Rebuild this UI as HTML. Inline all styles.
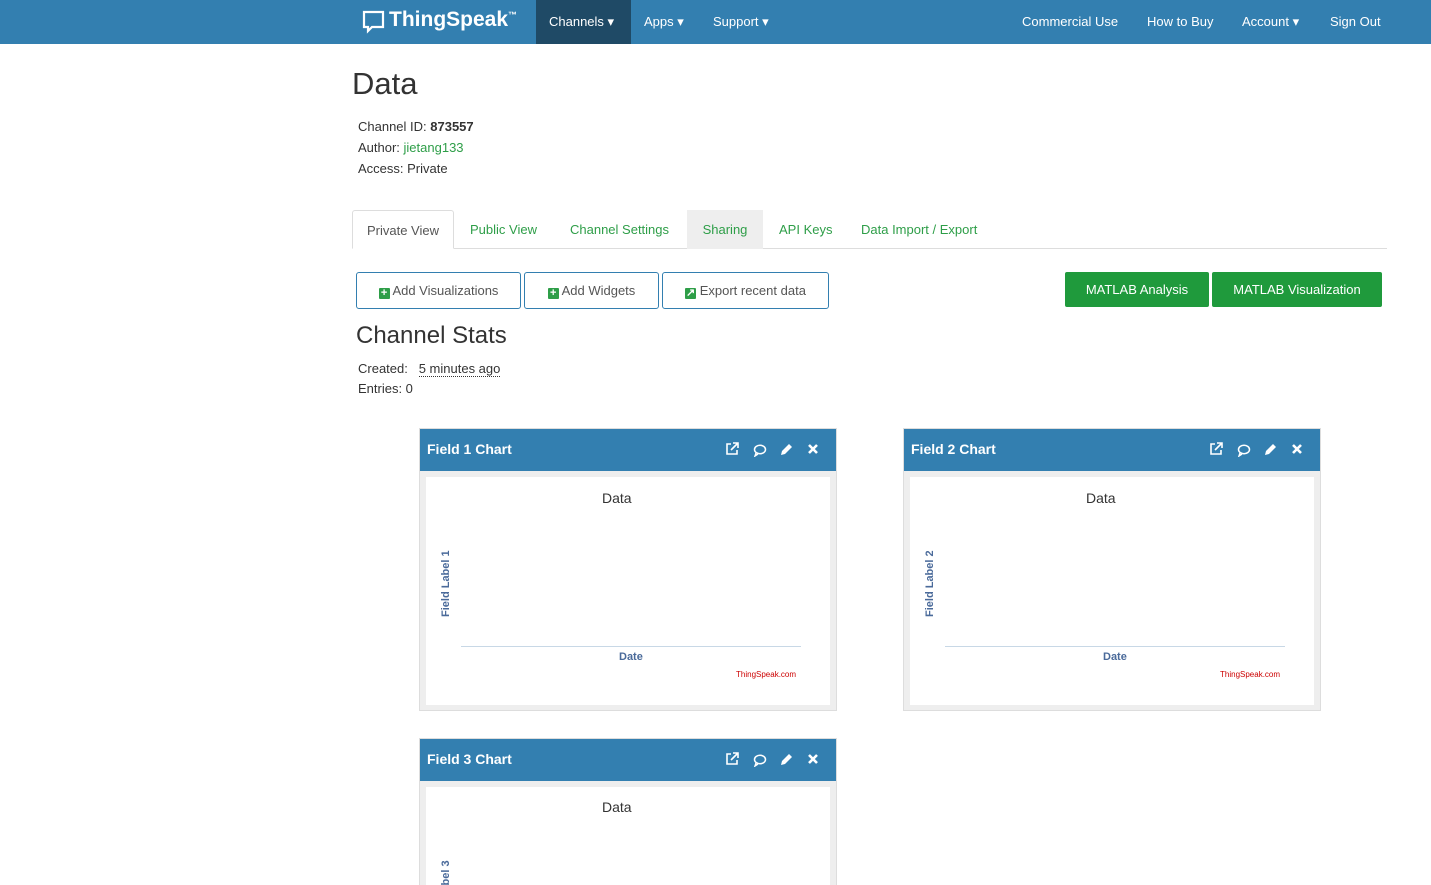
<!DOCTYPE html>
<html><head><style>
*{box-sizing:border-box}
html,body{margin:0;width:1431px;height:885px;overflow:hidden}
body{font-family:"Liberation Sans",sans-serif;font-size:13px;color:#333;background:#fff;position:relative}
.nav{position:absolute;left:0;top:0;width:1431px;height:44px;background:#337fb0;color:#fff}
.nav span{position:absolute;top:14px;font-size:13px}
.a{position:absolute}
.green{color:#2e9e48}
.tab{position:absolute;top:210px;height:39px;padding-top:12px;font-size:13px;color:#2e9e48}
.btn{position:absolute;top:272px;height:37px;border:1px solid #337fb0;border-radius:3px;text-align:center;padding-top:10px;font-size:13px;color:#555}
.gbtn{position:absolute;top:272px;height:35px;background:#1f9a3c;color:#fff;border-radius:2px;text-align:center;padding-top:10px;font-size:13px}
.pi{display:inline-block;width:11px;height:11px;background:#2e9e48;color:#fff;font-size:11px;line-height:11px;font-weight:bold;vertical-align:-1px;border-radius:1px}
.panel{position:absolute;width:418px;border:1px solid #ddd;background:#eee;overflow:hidden}
.ph{height:42px;background:#337fb0;color:#fff;font-weight:bold;font-size:14px;padding:12px 7px;position:relative}
.ph svg{position:absolute;top:13px}
.pb{position:absolute;left:6px;top:48px;width:404px;background:#fff}
</style></head><body>
<div class="nav">
<svg style="position:absolute;left:362px;top:10px" width="24" height="24" viewBox="0 0 24 24"><path d="M2 2h19v15H10l-4 4v-4H2z" fill="none" stroke="#fff" stroke-width="2.2"/></svg>
<span style="left:389px;top:8px;font-size:21px;font-weight:bold">ThingSpeak<sup style="font-size:9px">™</sup></span>
<div style="position:absolute;left:536px;top:0;width:95px;height:44px;background:#1f4a66"></div>
<span style="left:549px">Channels ▾</span>
<span style="left:644px">Apps ▾</span>
<span style="left:713px">Support ▾</span>
<span style="left:1022px">Commercial Use</span>
<span style="left:1147px">How to Buy</span>
<span style="left:1242px">Account ▾</span>
<span style="left:1330px">Sign Out</span>
</div>
<div class="a" style="left:352px;top:66px;font-size:31px;color:#333">Data</div>
<div class="a" style="left:358px;top:116px;line-height:21px">Channel ID: <b>873557</b><br>Author: <span class="green">jietang133</span><br>Access: Private</div>
<div class="a" style="left:352px;top:248px;width:1035px;border-top:1px solid #ddd"></div>
<div class="tab" style="left:352px;width:102px;border:1px solid #ddd;border-bottom:1px solid #fff;background:#fff;color:#555;text-align:center;border-radius:3px 3px 0 0">Private View</div>
<div class="tab" style="left:470px">Public View</div>
<div class="tab" style="left:570px">Channel Settings</div>
<div class="tab" style="left:687px;width:76px;background:#eee;text-align:center">Sharing</div>
<div class="tab" style="left:779px">API Keys</div>
<div class="tab" style="left:861px">Data Import / Export</div>
<div class="btn" style="left:356px;width:165px"><span class="pi">+</span> Add Visualizations</div>
<div class="btn" style="left:524px;width:135px"><span class="pi">+</span> Add Widgets</div>
<div class="btn" style="left:662px;width:167px"><span class="pi">↗</span> Export recent data</div>
<div class="gbtn" style="left:1065px;width:144px">MATLAB Analysis</div>
<div class="gbtn" style="left:1212px;width:170px">MATLAB Visualization</div>
<div class="a" style="left:356px;top:322px;font-size:24px;color:#333">Channel Stats</div>
<div class="a" style="left:358px;top:359px;line-height:20px">Created: &nbsp;&nbsp;<span style="border-bottom:1px dotted #333">5 minutes ago</span><br>Entries: 0</div>

<div class="panel" style="left:419px;top:428px;height:283px">
<div class="ph">Field 1 Chart
<svg style="left:305px" width="14" height="14" viewBox="0 0 14 14"><path d="M6 2H2v10h10V8" fill="none" stroke="#fff" stroke-width="1.6"/><path d="M8 1h5v5M13 1L6 8" fill="none" stroke="#fff" stroke-width="1.6"/></svg>
<svg style="left:333px;top:15px" width="14" height="13" viewBox="0 0 14 13"><ellipse cx="7" cy="5.5" rx="5.5" ry="4.2" fill="none" stroke="#fff" stroke-width="1.5"/><path d="M3 9l-1 3 3-2" fill="none" stroke="#fff" stroke-width="1.4"/></svg>
<svg style="left:360px;top:14px" width="13" height="13" viewBox="0 0 13 13"><path d="M1 12l1-4 7-7 3 3-7 7z" fill="#fff"/></svg>
<svg style="left:388px;top:15px" width="10" height="10" viewBox="0 0 10 10"><path d="M1 1l8 8M9 1l-8 8" stroke="#fff" stroke-width="2.6"/></svg>
</div>
<div class="pb" style="height:228px">
<div class="a" style="left:176px;top:13px;font-size:14px">Data</div>
<div class="a" style="left:14px;top:140px;transform:rotate(-90deg);transform-origin:0 0;font-size:11px;font-weight:bold;color:#4a6a9a">Field Label 1</div>
<div class="a" style="left:35px;top:169px;width:340px;border-top:1px solid #c8d8e6"></div>
<div class="a" style="left:193px;top:174px;font-size:11px;font-weight:bold;color:#4a6a9a">Date</div>
<div class="a" style="left:310px;top:193px;font-size:8px;color:#c00">ThingSpeak.com</div>
</div></div>

<div class="panel" style="left:903px;top:428px;height:283px">
<div class="ph">Field 2 Chart
<svg style="left:305px" width="14" height="14" viewBox="0 0 14 14"><path d="M6 2H2v10h10V8" fill="none" stroke="#fff" stroke-width="1.6"/><path d="M8 1h5v5M13 1L6 8" fill="none" stroke="#fff" stroke-width="1.6"/></svg>
<svg style="left:333px;top:15px" width="14" height="13" viewBox="0 0 14 13"><ellipse cx="7" cy="5.5" rx="5.5" ry="4.2" fill="none" stroke="#fff" stroke-width="1.5"/><path d="M3 9l-1 3 3-2" fill="none" stroke="#fff" stroke-width="1.4"/></svg>
<svg style="left:360px;top:14px" width="13" height="13" viewBox="0 0 13 13"><path d="M1 12l1-4 7-7 3 3-7 7z" fill="#fff"/></svg>
<svg style="left:388px;top:15px" width="10" height="10" viewBox="0 0 10 10"><path d="M1 1l8 8M9 1l-8 8" stroke="#fff" stroke-width="2.6"/></svg>
</div>
<div class="pb" style="height:228px">
<div class="a" style="left:176px;top:13px;font-size:14px">Data</div>
<div class="a" style="left:14px;top:140px;transform:rotate(-90deg);transform-origin:0 0;font-size:11px;font-weight:bold;color:#4a6a9a">Field Label 2</div>
<div class="a" style="left:35px;top:169px;width:340px;border-top:1px solid #c8d8e6"></div>
<div class="a" style="left:193px;top:174px;font-size:11px;font-weight:bold;color:#4a6a9a">Date</div>
<div class="a" style="left:310px;top:193px;font-size:8px;color:#c00">ThingSpeak.com</div>
</div></div>

<div class="panel" style="left:419px;top:738px;height:147px;border-bottom:none">
<div class="ph">Field 3 Chart
<svg style="left:305px" width="14" height="14" viewBox="0 0 14 14"><path d="M6 2H2v10h10V8" fill="none" stroke="#fff" stroke-width="1.6"/><path d="M8 1h5v5M13 1L6 8" fill="none" stroke="#fff" stroke-width="1.6"/></svg>
<svg style="left:333px;top:15px" width="14" height="13" viewBox="0 0 14 13"><ellipse cx="7" cy="5.5" rx="5.5" ry="4.2" fill="none" stroke="#fff" stroke-width="1.5"/><path d="M3 9l-1 3 3-2" fill="none" stroke="#fff" stroke-width="1.4"/></svg>
<svg style="left:360px;top:14px" width="13" height="13" viewBox="0 0 13 13"><path d="M1 12l1-4 7-7 3 3-7 7z" fill="#fff"/></svg>
<svg style="left:388px;top:15px" width="10" height="10" viewBox="0 0 10 10"><path d="M1 1l8 8M9 1l-8 8" stroke="#fff" stroke-width="2.6"/></svg>
</div>
<div class="pb" style="height:99px;overflow:hidden">
<div class="a" style="left:176px;top:12px;font-size:14px">Data</div>
<div class="a" style="left:14px;top:140px;transform:rotate(-90deg);transform-origin:0 0;font-size:11px;font-weight:bold;color:#4a6a9a">Field Label 3</div>
</div></div>
</body></html>
